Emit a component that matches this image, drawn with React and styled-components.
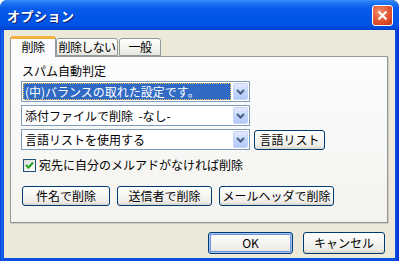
import styled, { createGlobalStyle } from "styled-components";

const GlobalStyle = createGlobalStyle`
  html, body { margin: 0; padding: 0; background: #ffffff; }
  body { font-family: "Noto Sans CJK JP", "Noto Sans", sans-serif; font-size: 12px; color: #000; }
`;

const Window = styled.div`
  width: 399px;
  height: 261px;
  box-sizing: border-box;
  display: flex;
  flex-direction: column;
  background: linear-gradient(to right, #0a3bd8 0, #166aee 2px, #0b4de0 4px, #0b4de0 395px, #0831d9 399px);
  border-radius: 7px 7px 0 0;
  overflow: hidden;
`;

const TitleBar = styled.div`
  height: 30px;
  flex: none;
  display: flex;
  align-items: center;
  justify-content: space-between;
  padding: 0 6px 0 7px;
  background: linear-gradient(to bottom, #3b8cf5 0, #1f76f4 3px, #0a5ded 8px, #0056e8 16px, #0055e6 24px, #0048d8 28px, #0040cc 30px);
  border-radius: 7px 7px 0 0;
`;

const Title = styled.span`
  color: #fff;
  font-weight: bold;
  font-size: 13px;
  letter-spacing: 0.5px;
  text-shadow: 1px 1px 0 #0a1c6e;
`;

const CloseButton = styled.div`
  width: 21px;
  height: 21px;
  box-sizing: border-box;
  border: 1px solid #fff;
  border-radius: 3px;
  background: radial-gradient(circle at 35% 30%, #f08a6a 0, #e2542e 55%, #c1371a 100%);
  display: flex;
  align-items: center;
  justify-content: center;
  margin-top: 1px;
`;

const Body = styled.div`
  flex: 1;
  margin: 0 4px 3px 4px;
  background: #ece9d8;
  display: flex;
  flex-direction: column;
  padding: 5px 7px 0 6px;
`;

const TabStrip = styled.div`
  display: flex;
  align-items: flex-end;
  height: 21px;
  position: relative;
  z-index: 1;
`;

const Tab = styled.div`
  box-sizing: border-box;
  width: ${(p) => p.$w}px;
  height: ${(p) => (p.$active ? 21 : 18)}px;
  border: 1px solid #919b9c;
  border-bottom: ${(p) => (p.$active ? "none" : "1px solid #919b9c")};
  border-radius: 3px 3px 0 0;
  background: ${(p) => (p.$active ? "#fcfcfe" : "linear-gradient(to bottom, #ffffff, #f3f3ef 60%, #e6e5de)")};
  border-top: ${(p) => (p.$active ? "3px solid #f5b13c" : "1px solid #919b9c")};
  display: flex;
  justify-content: center;
  align-items: center;
  padding-bottom: ${(p) => (p.$active ? 2 : 0)}px;
  margin-right: ${(p) => (p.$gap ? 1 : 0)}px;
  margin-bottom: ${(p) => (p.$active ? -1 : 0)}px;
  font-size: 12px;
  line-height: 14px;
  letter-spacing: -0.6px;
  white-space: nowrap;
`;

const Panel = styled.div`
  height: 167px;
  box-sizing: border-box;
  border: 1px solid #919b9c;
  border-right-color: #8d9596;
  border-bottom-color: #8c9494;
  box-shadow: 1px 1px 0 #d0cec1;
  background: linear-gradient(to bottom, #fcfcfe, #f4f3ee);
  padding: 6px 10px 0 10px;
  display: flex;
  flex-direction: column;
`;

const Label = styled.div`
  height: 16px;
  line-height: 16px;
  padding-left: 1px;
  margin-bottom: 2px;
`;

const ComboRow = styled.div`
  display: flex;
  align-items: center;
  gap: 4px;
  margin-bottom: ${(p) => p.$mb}px;
`;

const Combo = styled.div`
  width: 229px;
  height: 21px;
  box-sizing: border-box;
  border: 1px solid #7f9db9;
  background: #fff;
  display: flex;
  align-items: stretch;
  padding: 1px;
`;

const ComboText = styled.div`
  flex: 1;
  display: flex;
  align-items: center;
  padding-left: 2px;
  margin-right: 2px;
  background: ${(p) => (p.$selected ? "#316ac5" : "transparent")};
  color: ${(p) => (p.$selected ? "#fff" : "#000")};
  outline: ${(p) => (p.$selected ? "1px dotted #f7c64a" : "none")};
  outline-offset: -1px;
  white-space: pre;
  overflow: hidden;
  line-height: 15px;
`;

const ArrowButton = styled.div`
  width: 15px;
  box-sizing: border-box;
  border: 1px solid #c3d3fd;
  border-radius: 2px;
  background: linear-gradient(to bottom, #e2ebff, #c6d7fd 50%, #b4c9f7);
  display: flex;
  align-items: center;
  justify-content: center;
`;

const Button = styled.div`
  box-sizing: border-box;
  width: ${(p) => p.$w}px;
  height: ${(p) => p.$h || 20}px;
  border: 1px solid #003c74;
  border-radius: 3px;
  background: linear-gradient(to bottom, #ffffff 0, #f7f7f4 40%, #ecebe6 85%, #d6d0c5 100%);
  box-shadow: ${(p) => (p.$default ? "inset 0 0 0 1px #a6c3f5, inset 0 0 0 2px #6e95e2" : "none")};
  display: flex;
  align-items: center;
  justify-content: center;
  white-space: nowrap;
  line-height: 14px;
  font-size: 12px;
`;

const CheckRow = styled.div`
  display: flex;
  align-items: center;
  gap: 3px;
  margin: 0 0 14px 2px;
  line-height: 14px;
`;

const CheckBox = styled.div`
  width: 13px;
  height: 13px;
  box-sizing: border-box;
  border: 1px solid #1c5180;
  background: linear-gradient(135deg, #dcdcd7, #ffffff);
  display: flex;
  align-items: center;
  justify-content: center;
`;

const ButtonRow = styled.div`
  display: flex;
  gap: 7px;
  padding-left: 1px;
`;

const Footer = styled.div`
  display: flex;
  justify-content: flex-end;
  gap: 10px;
  padding: 9px 3px 0 0;
`;

const Chevron = () => (
  <svg width="9" height="6" viewBox="0 0 9 6">
    <path d="M1 1 L4.5 4.5 L8 1" fill="none" stroke="#4d6185" strokeWidth="2.2" />
  </svg>
);

const ComboBox = ({ text, selected }) => (
  <Combo>
    <ComboText $selected={selected}>{text}</ComboText>
    <ArrowButton>
      <Chevron />
    </ArrowButton>
  </Combo>
);

export default function App() {
  return (
    <>
      <GlobalStyle />
      <Window>
        <TitleBar>
          <Title>オプション</Title>
          <CloseButton>
            <svg width="11" height="11" viewBox="0 0 11 11">
              <path d="M1.5 1.5 L9.5 9.5 M9.5 1.5 L1.5 9.5" stroke="#fff" strokeWidth="2.2" />
            </svg>
          </CloseButton>
        </TitleBar>
        <Body>
          <TabStrip>
            <Tab $active $w={46}>削除</Tab>
            <Tab $w={62} $gap>削除しない</Tab>
            <Tab $w={42}>一般</Tab>
          </TabStrip>
          <Panel>
            <Label>スパム自動判定</Label>
            <ComboRow $mb={3}>
              <ComboBox selected text="(中)バランスの取れた設定です。" />
            </ComboRow>
            <ComboRow $mb={3}>
              <ComboBox text="添付ファイルで削除  -なし-" />
            </ComboRow>
            <ComboRow $mb={8}>
              <ComboBox text="言語リストを使用する" />
              <Button $w={71}>言語リスト</Button>
            </ComboRow>
            <CheckRow>
              <CheckBox>
                <svg width="9" height="9" viewBox="0 0 9 9">
                  <path d="M1 4 L3.5 6.5 L8 1.5" fill="none" stroke="#21a121" strokeWidth="2" />
                </svg>
              </CheckBox>
              宛先に自分のメルアドがなければ削除
            </CheckRow>
            <ButtonRow>
              <Button $w={88}>件名で削除</Button>
              <Button $w={95}>送信者で削除</Button>
              <Button $w={115}>メールヘッダで削除</Button>
            </ButtonRow>
          </Panel>
          <Footer>
            <Button $w={85} $h={22} $default>OK</Button>
            <Button $w={82} $h={22}>キャンセル</Button>
          </Footer>
        </Body>
      </Window>
    </>
  );
}
